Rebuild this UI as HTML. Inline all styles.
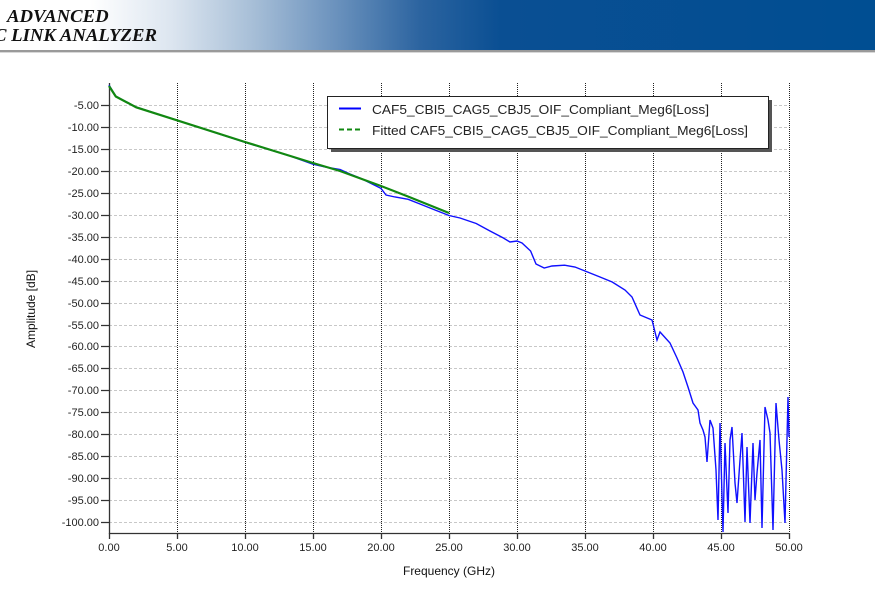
<!DOCTYPE html>
<html><head><meta charset="utf-8"><style>
body{margin:0;width:875px;height:593px;overflow:hidden;background:#fff;font-family:"Liberation Sans",sans-serif}
.hdr{position:absolute;left:0;top:0;width:875px;height:50px;background:linear-gradient(90deg,#fff 0px,#fff 90px,#dde6f0 170px,#a9c0d8 250px,#6f95bf 330px,#2c64a0 420px,#0a4f93 500px,#004e92 875px)}
.t{position:absolute;font-family:"Liberation Serif",serif;font-style:italic;font-weight:bold;color:#111;font-size:18px;transform:scaleX(1.04);transform-origin:left;white-space:nowrap}
</style></head><body>
<div class="hdr"></div>
<div class="t" style="left:7px;top:6px">ADVANCED</div>
<div class="t" style="left:-6px;top:25px">C LINK ANALYZER</div>
<div style="position:absolute;left:0;top:50px;width:875px;height:2px;background:#9a9a9a"></div>
<div style="position:absolute;left:0;top:52px;width:875px;height:1px;background:#d8d8d8"></div>
<svg width="875" height="593" style="position:absolute;left:0;top:0" font-family="Liberation Sans, sans-serif">
<g stroke="#c8c8c8" stroke-dasharray="3,2" stroke-width="1">
<path d="M109 105.5H789M109 127.5H789M109 149.5H789M109 171.5H789M109 193.5H789M109 215.5H789M109 237.5H789M109 259.5H789M109 281.5H789M109 303.5H789M109 325.5H789M109 346.5H789M109 368.5H789M109 390.5H789M109 412.5H789M109 434.5H789M109 456.5H789M109 478.5H789M109 500.5H789M109 522.5H789"/>
</g>
<g stroke="#222" stroke-dasharray="1,1" stroke-width="1">
<path d="M177.5 83V533M245.5 83V533M313.5 83V533M381.5 83V533M449.5 83V533M517.5 83V533M585.5 83V533M653.5 83V533M721.5 83V533M789.5 83V533"/>
</g>
<g stroke="#333" stroke-width="1.3" fill="none">
<path d="M109.5 83V533.5H789"/>
<path d="M101 105.5h8M101 127.5h8M101 149.5h8M101 171.5h8M101 193.5h8M101 215.5h8M101 237.5h8M101 259.5h8M101 281.5h8M101 303.5h8M101 325.5h8M101 346.5h8M101 368.5h8M101 390.5h8M101 412.5h8M101 434.5h8M101 456.5h8M101 478.5h8M101 500.5h8M101 522.5h8"/>
<path d="M109.5 533v6M177.5 533v6M245.5 533v6M313.5 533v6M381.5 533v6M449.5 533v6M517.5 533v6M585.5 533v6M653.5 533v6M721.5 533v6M789.5 533v6"/>
</g>
<g font-size="11" fill="#222" text-anchor="end">
<text x="99" y="109">-5.00</text><text x="99" y="131">-10.00</text><text x="99" y="153">-15.00</text><text x="99" y="175">-20.00</text><text x="99" y="197">-25.00</text><text x="99" y="219">-30.00</text><text x="99" y="241">-35.00</text><text x="99" y="263">-40.00</text><text x="99" y="285">-45.00</text><text x="99" y="307">-50.00</text><text x="99" y="329">-55.00</text><text x="99" y="350">-60.00</text><text x="99" y="372">-65.00</text><text x="99" y="394">-70.00</text><text x="99" y="416">-75.00</text><text x="99" y="438">-80.00</text><text x="99" y="460">-85.00</text><text x="99" y="482">-90.00</text><text x="99" y="504">-95.00</text><text x="99" y="526">-100.00</text>
</g>
<g font-size="11" fill="#222" text-anchor="middle">
<text x="109" y="551">0.00</text><text x="177" y="551">5.00</text><text x="245" y="551">10.00</text><text x="313" y="551">15.00</text><text x="381" y="551">20.00</text><text x="449" y="551">25.00</text><text x="517" y="551">30.00</text><text x="585" y="551">35.00</text><text x="653" y="551">40.00</text><text x="721" y="551">45.00</text><text x="789" y="551">50.00</text>
</g>
<text x="449" y="575" font-size="12" fill="#111" text-anchor="middle">Frequency (GHz)</text>
<text transform="translate(35,309) rotate(-90)" font-size="12" fill="#111" text-anchor="middle">Amplitude [dB]</text>
<path fill="none" stroke="#1010ff" stroke-width="1.4" d="M109 85L115.8 96.2L136.2 107.1L177 120.3L245 142.3L290 156L313 164.2L325 167L340.2 169.5L350 174L360 178L381 188.4L386 195L395 197L408.2 199.3L420 204L435 210L449 215.5L460 218L476.2 223.5L490 231L503.4 238L510 242L517 241L522 243L530.6 251L536 264L544.2 268L552 266L564.6 265.2L575 267L585 271L600 277L612.2 282L625 290L632 297L640 315L652 320L657 340L660 332L670 343L677 358L683 372L688 387L693 403L698 410L700 423L703 430L705 437L707 462L710 420L713 428L716 470L718 520L720 423L723 532L725 443L727 490L728 513L730 440L732 427L735 483L737 503L740 460L742 433L745 522L747 447L750 523L753 443L755 500L757 473L760 440L762 528L765 407L768 420L770 433L773 530L776 403L779 440L782 470L785 523L788 397L789 437"/>
<path fill="none" stroke="#118811" stroke-width="2.2" d="M109 86L115.8 96.5L136.2 107.3L177 120.3L245 142L313 163L340 171L381 186L408 196.5L449 213"/>
<rect x="331" y="100" width="441" height="52" fill="#555"/>
<rect x="327.5" y="96.5" width="441" height="52" fill="#fff" stroke="#222"/>
<path d="M339 108.5h22" stroke="#0000ff" stroke-width="2"/>
<path d="M339 129.5h22" stroke="#118811" stroke-width="2" stroke-dasharray="5,3"/>
<text x="372" y="114" font-size="13" fill="#222" textLength="337" lengthAdjust="spacingAndGlyphs">CAF5_CBI5_CAG5_CBJ5_OIF_Compliant_Meg6[Loss]</text>
<text x="372" y="135" font-size="13" fill="#222" textLength="376" lengthAdjust="spacingAndGlyphs">Fitted CAF5_CBI5_CAG5_CBJ5_OIF_Compliant_Meg6[Loss]</text>
</svg>
</body></html>
